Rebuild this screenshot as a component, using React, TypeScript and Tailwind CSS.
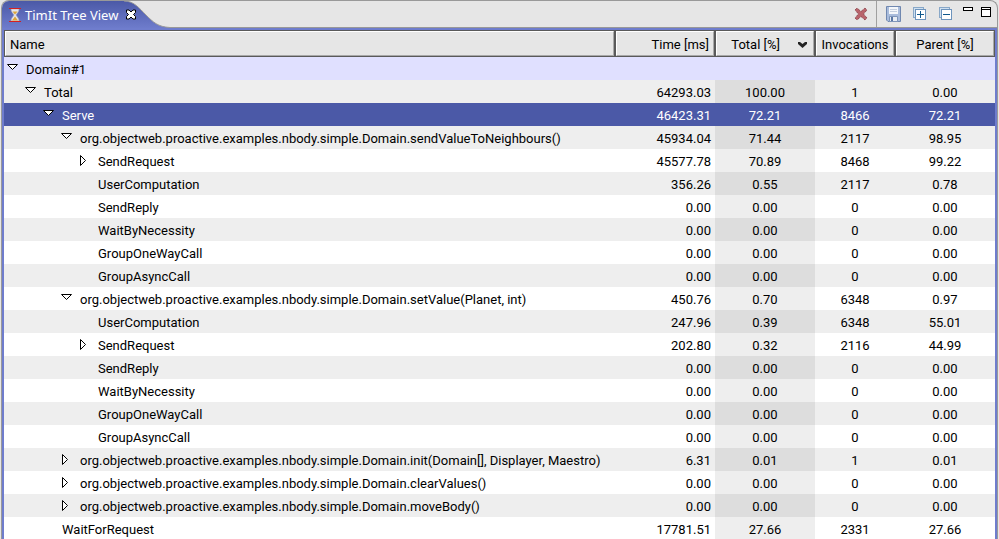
import { useState } from 'react';

type Row = {
  name: string;
  level: number;
  state?: 'open' | 'closed';
  values?: [string, string, string, string];
};

const rows: Row[] = [
  { name: 'Domain#1', level: 0, state: 'open' },
  { name: 'Total', level: 1, state: 'open', values: ['64293.03', '100.00', '1', '0.00'] },
  { name: 'Serve', level: 2, state: 'open', values: ['46423.31', '72.21', '8466', '72.21'] },
  { name: 'org.objectweb.proactive.examples.nbody.simple.Domain.sendValueToNeighbours()', level: 3, state: 'open', values: ['45934.04', '71.44', '2117', '98.95'] },
  { name: 'SendRequest', level: 4, state: 'closed', values: ['45577.78', '70.89', '8468', '99.22'] },
  { name: 'UserComputation', level: 4, values: ['356.26', '0.55', '2117', '0.78'] },
  { name: 'SendReply', level: 4, values: ['0.00', '0.00', '0', '0.00'] },
  { name: 'WaitByNecessity', level: 4, values: ['0.00', '0.00', '0', '0.00'] },
  { name: 'GroupOneWayCall', level: 4, values: ['0.00', '0.00', '0', '0.00'] },
  { name: 'GroupAsyncCall', level: 4, values: ['0.00', '0.00', '0', '0.00'] },
  { name: 'org.objectweb.proactive.examples.nbody.simple.Domain.setValue(Planet, int)', level: 3, state: 'open', values: ['450.76', '0.70', '6348', '0.97'] },
  { name: 'UserComputation', level: 4, values: ['247.96', '0.39', '6348', '55.01'] },
  { name: 'SendRequest', level: 4, state: 'closed', values: ['202.80', '0.32', '2116', '44.99'] },
  { name: 'SendReply', level: 4, values: ['0.00', '0.00', '0', '0.00'] },
  { name: 'WaitByNecessity', level: 4, values: ['0.00', '0.00', '0', '0.00'] },
  { name: 'GroupOneWayCall', level: 4, values: ['0.00', '0.00', '0', '0.00'] },
  { name: 'GroupAsyncCall', level: 4, values: ['0.00', '0.00', '0', '0.00'] },
  { name: 'org.objectweb.proactive.examples.nbody.simple.Domain.init(Domain[], Displayer, Maestro)', level: 3, state: 'closed', values: ['6.31', '0.01', '1', '0.01'] },
  { name: 'org.objectweb.proactive.examples.nbody.simple.Domain.clearValues()', level: 3, state: 'closed', values: ['0.00', '0.00', '0', '0.00'] },
  { name: 'org.objectweb.proactive.examples.nbody.simple.Domain.moveBody()', level: 3, state: 'closed', values: ['0.00', '0.00', '0', '0.00'] },
  { name: 'WaitForRequest', level: 2, values: ['17781.51', '27.66', '2331', '27.66'] },
];

const indents = ['pl-0', 'pl-[18px]', 'pl-[36px]', 'pl-[54px]', 'pl-[72px]'];

const headCell = 'h-[27px] p-0 font-normal border border-[#5a5a5a]';
const headInner = 'flex h-[25px] w-full items-center border border-t-white border-l-white border-r-[#a8a8a8] border-b-[#a8a8a8] bg-[#e6e6e6] px-1 pt-0.5';
const cell = 'p-0 pt-0.5';

const Twisty = ({ open }: { open: boolean }) => (
  <button aria-label="Toggle" aria-expanded={open} className="block">
    <svg width="12" height="13" viewBox="0 0 12 13" fill="#fff" stroke="#000" aria-hidden="true">
      {open ? <path d="M.5 2.5H10.500L5.500 7.500Z" /> : <path d="M1.500 1.500V11.500L6.500 6.500Z" />}
    </svg>
  </button>
);

const Hourglass = () => (
  <svg width="12" height="16" viewBox="0 0 12 16" aria-hidden="true">
    <path d="M2 2H10C10 5 8 6 7 8C8 10 10 11 10 14H2C2 11 4 10 5 8C4 6 2 5 2 2Z" fill="#e6e6ea" stroke="#a8a8b8" strokeWidth=".6" />
    <path d="M3.500 4.500H8.500L6 7.500ZM6 9.500L9 13.500H3Z" fill="#dda63a" />
    <path d="M0 1.500H12M0 14.500H12" stroke="#d42020" />
  </svg>
);

const DeleteIcon = () => (
  <svg width="14" height="14" viewBox="0 0 14 14" aria-hidden="true">
    <path d="M1 3L3 1L7 4.500L11 1L13 3L9.500 7L13 11L11 13L7 9.500L3 13L1 11L4.500 7Z" fill="#b8646c" stroke="#7c3038" strokeDasharray="1 1" />
  </svg>
);

const SaveIcon = () => (
  <svg width="16" height="16" viewBox="0 0 16 16" aria-hidden="true">
    <path d="M1.500 .5H15.500V15.500H3L1.500 14Z" fill="#a9bcdc" stroke="#7088b0" />
    <path d="M4 1H13V8H4Z" fill="#f4f7fb" />
    <path d="M5 3.500H12M5 5.500H12" stroke="#c4cede" />
    <path d="M4.500 10.500H12.500V15.500H4.500Z" fill="#e8edf4" stroke="#7f96ba" />
    <path d="M6 11H8V15H6Z" fill="#5876a4" />
  </svg>
);

const BoxIcon = ({ plus }: { plus?: boolean }) => (
  <svg width="14" height="14" viewBox="0 0 14 14" shapeRendering="crispEdges" aria-hidden="true">
    <path d="M.5 .5H10.500V10.500H.5Z" fill="#cfe0f0" stroke="#89a8c8" />
    <path d="M2.500 2.500H12.500V12.500H2.500Z" fill="#fff" stroke="#6d94bd" />
    <path d={plus ? 'M4 7.500H11M7.500 4V11' : 'M4 7.500H11'} stroke="#10588c" />
  </svg>
);

const App = () => {
  const [selected, setSelected] = useState(2);

  return (
    <main className="h-screen overflow-hidden bg-[#e6e6e6] px-px font-[Roboto,sans-serif] text-[13px] leading-[21px] text-black">
      <header className="flex h-7 items-start overflow-hidden rounded-t-lg border border-b-0 border-[#999]">
        <div className="relative flex h-7 w-[170px] shrink-0 items-center pl-[7px] text-white">
          <svg className="absolute inset-0" width="170" height="28" viewBox="0 0 170 28" aria-hidden="true">
            <defs>
              <linearGradient id="tab" x2="0" y2="1">
                <stop stopColor="#4b59a7" />
                <stop offset="1" stopColor="#6f7dcd" />
              </linearGradient>
            </defs>
            <path d="M0 0H122C132 0 137 7 144 14C151 21 156 26 168 26.500H170V28H0Z" fill="url(#tab)" />
            <path d="M122 0C132 0 137 7 144 14C151 21 156 26 168 26.500H170" fill="none" stroke="#999" />
          </svg>
          <div className="relative flex items-center">
            <Hourglass />
            <h1 className="ml-1 font-['Noto_Sans',sans-serif]">TimIt Tree View</h1>
            <button aria-label="Close" className="ml-[7px]">
              <svg width="12" height="12" viewBox="0 0 12 12" aria-hidden="true">
                <path d="M1.500 1H4L6 3L8 1H10.500V3.500L8.500 5.500L10.500 7.500V10H8L6 8L4 10H1.500V7.500L3.500 5.500L1.500 3.500Z" fill="#fff" stroke="#000" />
              </svg>
            </button>
          </div>
        </div>
        <div className="flex h-[27px] flex-1 items-center justify-end border-b border-[#999] pr-1.5">
          <button aria-label="Delete" className="mr-2"><DeleteIcon /></button>
          <span className="mr-2 h-full w-px bg-[#a0a0a0]" />
          <button aria-label="Save" className="mr-3"><SaveIcon /></button>
          <button aria-label="Expand all" className="mr-3"><BoxIcon plus /></button>
          <button aria-label="Collapse all" className="mr-2.5"><BoxIcon /></button>
          <button aria-label="Minimize" className="mr-2 self-start pt-1.5">
            <svg width="10" height="10" viewBox="0 0 10 10" shapeRendering="crispEdges" aria-hidden="true">
              <path d="M.5 .5H9.500V3.500H.5Z" fill="#fff" stroke="#000" />
            </svg>
          </button>
          <button aria-label="Maximize" className="self-start pt-1.5">
            <svg width="10" height="10" viewBox="0 0 10 10" shapeRendering="crispEdges" aria-hidden="true">
              <path d="M.5 .5H9.500V9.500H.5ZM0 2.500H10" fill="#fff" stroke="#000" />
            </svg>
          </button>
        </div>
      </header>

      <div className="border-x border-[#999]">
        <div className="border-x-2 border-t-2 border-[#6f7dcd] bg-white">
          <table className="w-full table-fixed border-separate border-spacing-0">
            <colgroup>
              <col />
              <col className="w-[100px]" />
              <col className="w-[100px]" />
              <col className="w-[80px]" />
              <col className="w-[100px]" />
            </colgroup>
            <thead>
              <tr>
                <th className={headCell}><div className={headInner}>Name</div></th>
                <th className={headCell}><div className={`${headInner} justify-end`}>Time [ms]</div></th>
                <th className={headCell}>
                  <div className={`${headInner} justify-end gap-[18px]`}>
                    Total [%]
                    <svg className="mr-0.5" width="9" height="6" viewBox="0 0 9 6" aria-hidden="true">
                      <path d="M0 0H2L4.500 2L7 0H9V2L4.500 6L0 2Z" fill="#222" />
                    </svg>
                  </div>
                </th>
                <th className={headCell}><div className={`${headInner} justify-center`}>Invocations</div></th>
                <th className={headCell}><div className={`${headInner} justify-center`}>Parent [%]</div></th>
              </tr>
            </thead>
            <tbody>
              {rows.map((row, i) => {
                const active = i === selected;
                const odd = i % 2 === 1;
                const bg = active ? 'bg-[#4b59a7] text-white' : i === 0 ? 'bg-[#e0e0ff]' : odd ? 'bg-[#eeeeee]' : 'bg-white';
                const sorted = active || i === 0 ? '' : odd ? 'bg-[#dddddd]' : 'bg-[#eeeeee]';
                return (
                  <tr key={i} className={bg} onClick={() => setSelected(i)}>
                    <td className={`p-0 whitespace-nowrap ${indents[row.level]}`}>
                      <div className="flex h-[23px] items-center">
                        <span className="ml-[3px] mr-[7px] w-3">{row.state && <Twisty open={row.state === 'open'} />}</span>
                        <span className="pt-0.5">{row.name}</span>
                      </div>
                    </td>
                    <td className={`${cell} pr-1 text-right`}>{row.values?.[0]}</td>
                    <td className={`${cell} text-center ${sorted}`}>{row.values?.[1]}</td>
                    <td className={`${cell} text-center`}>{row.values?.[2]}</td>
                    <td className={`${cell} text-center`}>{row.values?.[3]}</td>
                  </tr>
                );
              })}
            </tbody>
          </table>
        </div>
      </div>
    </main>
  );
};

export default App;
